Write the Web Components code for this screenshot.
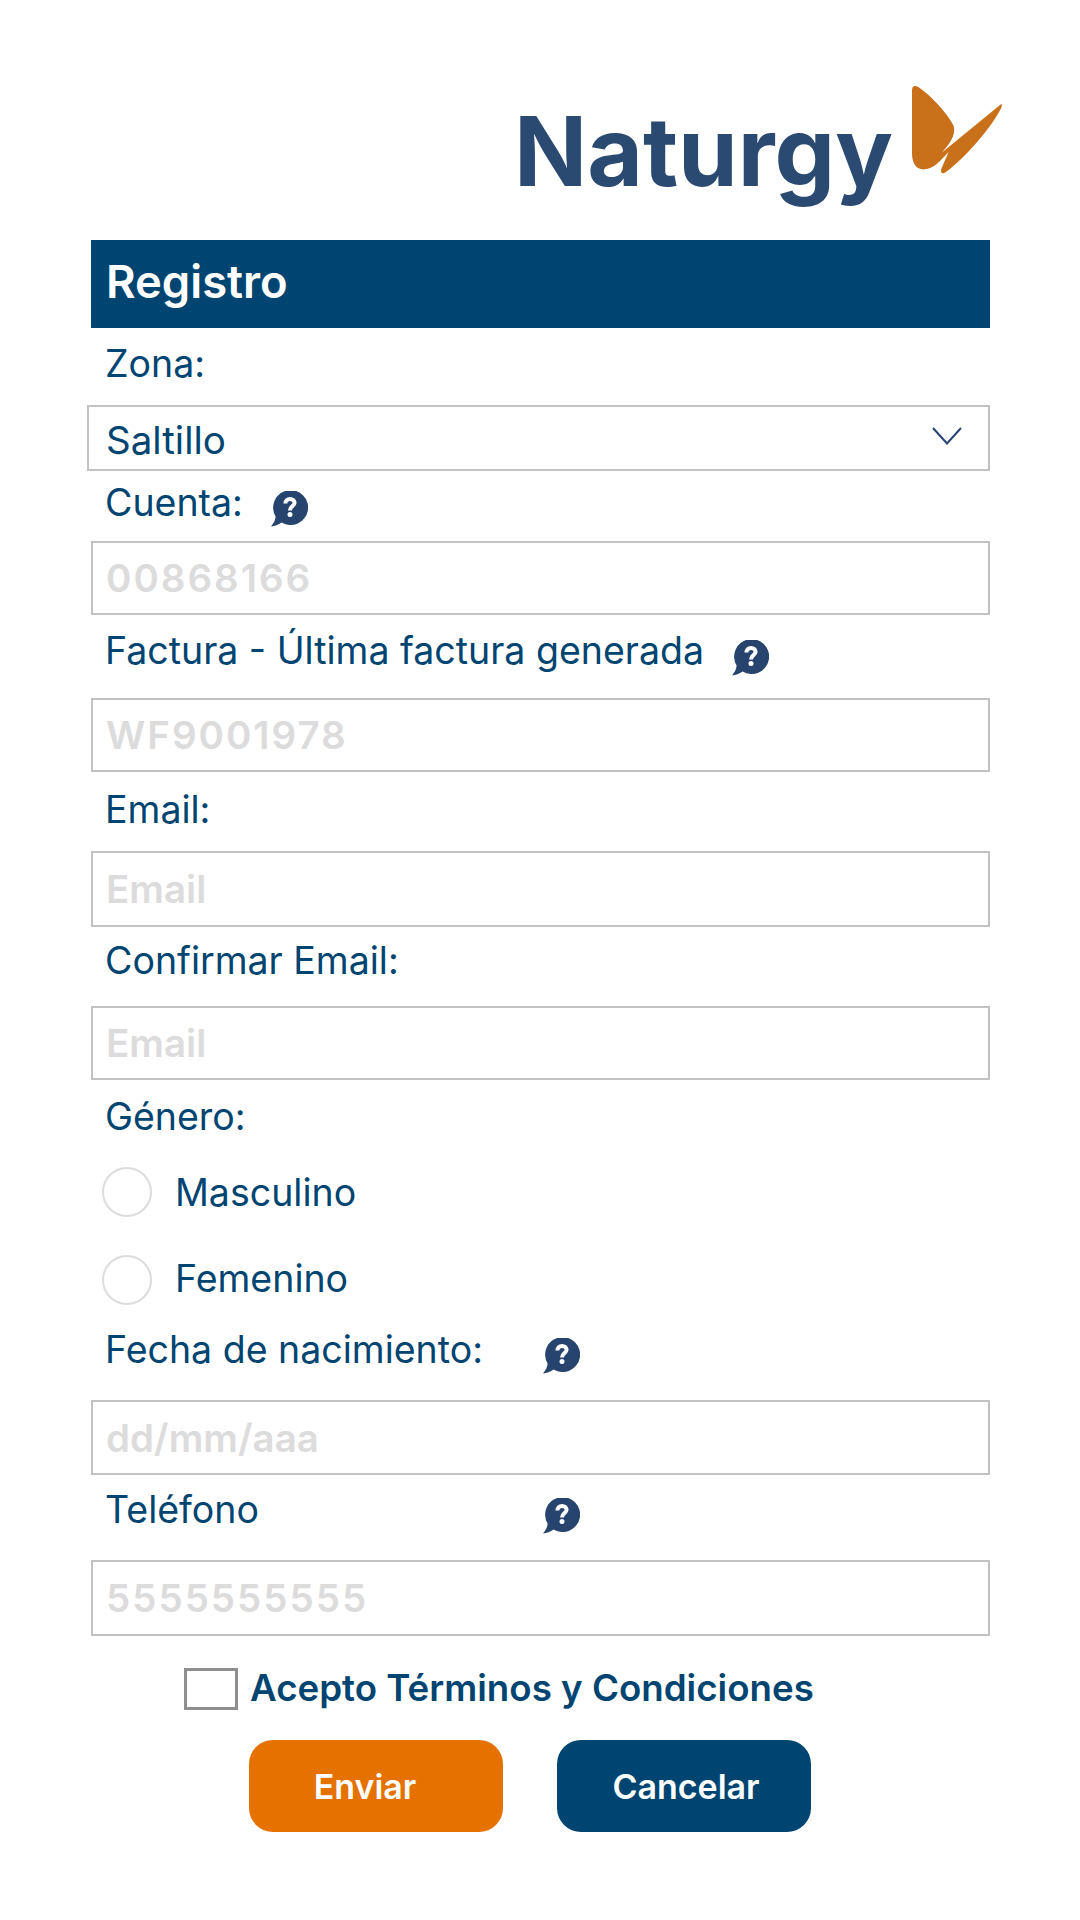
<!DOCTYPE html>
<html lang="es">
<head>
<meta charset="utf-8">
<title>Registro</title>
<style>
  html, body { margin: 0; background: #fff; }
  body { width: 1080px; height: 1920px; overflow: hidden; font-family: Inter, sans-serif; }
  registro-page { width: 1080px; }
</style>
</head>
<body>
<registro-page>
  <naturgy-logo></naturgy-logo>
  <form-bar>Registro</form-bar>
  <field-label style="--h:77px;--shift:-3px">Zona:</field-label>
  <select-field>Saltillo</select-field>
  <field-label style="--h:70px;--shift:-4px;--icon-shift:3px" help>Cuenta:</field-label>
  <text-field style="--h:74px" spaced>00868166</text-field>
  <field-label style="--h:83px;--shift:-6px;--icon-shift:1px" help>Factura - Última factura generada</field-label>
  <text-field style="--h:74px" spaced>WF9001978</text-field>
  <field-label style="--h:79px;--shift:-2px">Email:</field-label>
  <text-field style="--h:76px">Email</text-field>
  <field-label style="--h:79px;--shift:-6px">Confirmar Email:</field-label>
  <text-field style="--h:74px">Email</text-field>
  <field-label style="--h:87px;--shift:-7px">Género:</field-label>
  <radio-option>Masculino</radio-option>
  <radio-option style="--shift:-2px">Femenino</radio-option>
  <field-label style="--h:95px;--shift:-3px;--text-w:410px;--icon-shift:3px" help>Fecha de nacimiento:</field-label>
  <text-field style="--h:75px">dd/mm/aaa</text-field>
  <field-label style="--h:85px;--shift:-8px;--text-w:410px;--icon-shift:-2px" help>Teléfono</field-label>
  <text-field style="--h:76px" spaced>5555555555</text-field>
  <terms-check>Acepto Términos y Condiciones</terms-check>
  <form-actions>
    <action-button color="#e57200" style="--pad-r:22px">Enviar</action-button>
    <action-button color="#004571" style="--pad-l:4px">Cancelar</action-button>
  </form-actions>
</registro-page>

<script>
  const define = (name, html) => {
    customElements.define(name, class extends HTMLElement {
      constructor() {
        super();
        this.attachShadow({ mode: "open" });
        this.shadowRoot.innerHTML = html;
      }
    });
  };

  const FONT = 'Inter, "Noto Sans", sans-serif';
  const BLUE = "#004571";

  define("registro-page", `
    <style>
      :host { display: block; box-sizing: border-box; padding-left: 91px; padding-right: 90px; }
    </style>
    <slot></slot>
  `);

  define("naturgy-logo", `
    <style>
      :host { display: flex; justify-content: flex-end; align-items: flex-start; height: 240px; margin-right: -30px; }
      .word {
        margin-top: 91px;
        font: 700 96px/120px ${FONT};
        letter-spacing: 0;
        color: #2a4a72;
      }
      svg { width: 120px; height: 120px; margin-top: 70px; margin-left: 7px; }
    </style>
    <span class="word">Naturgy</span>
    <svg viewBox="0 0 360 360" aria-hidden="true">
      <path fill="#c8701a" d="M36 62C36 48 44 45 56 52C92 76 140 128 160 166C168 186 158 214 125 248L301 104C306 101 307 106 304 113C270 180 190 268 138 306C126 314 121 308 124 296L146 246C118 276 100 296 74 298C50 300 36 282 36 250Z"/>
    </svg>
  `);

  define("form-bar", `
    <style>
      :host {
        display: flex; align-items: center; height: 88px; padding-left: 15px;
        background: ${BLUE}; color: #fff;
        font: 600 45.4px ${FONT};
      }
      span { position: relative; top: -3px; }
    </style>
    <span><slot></slot></span>
  `);

  customElements.define("field-label", class extends HTMLElement {
    constructor() {
      super();
      this.attachShadow({ mode: "open" });
      this.shadowRoot.innerHTML = `
        <style>
          :host {
            display: flex; align-items: center; box-sizing: border-box;
            height: var(--h); padding-left: 14px;
            color: ${BLUE}; font: 400 37.5px ${FONT};
          }
          .text { position: relative; top: var(--shift, 0); min-width: var(--text-w, 0); }
          help-icon { margin-left: 27px; position: relative; top: var(--icon-shift, 0); }
        </style>
        <span class="text"><slot></slot></span>
      `;
      if (this.hasAttribute("help")) {
        this.shadowRoot.appendChild(document.createElement("help-icon"));
      }
    }
  });

  define("help-icon", `
    <style>
      :host { display: block; width: 38px; height: 36px; flex: none; }
      svg { display: block; width: 38px; height: 36px; }
    </style>
    <svg viewBox="0 0 38 36" aria-hidden="true">
      <path fill="#27446e" d="M1 35.5C4 32 5.4 29 5.6 25.6A17.5 17.5 0 1 1 11.6 31.6C8.4 34 4.8 35.4 1 35.5Z"/>
      <path fill="none" stroke="#fff" stroke-width="4" d="M15.4 12.6C15.4 9.6 17.4 8 20 8C22.6 8 24.6 9.6 24.6 11.8C24.6 15 20 15.2 20 19.4"/>
      <circle cx="20" cy="23.6" r="2.5" fill="#fff"/>
    </svg>
  `);

  define("select-field", `
    <style>
      :host {
        display: flex; align-items: center; justify-content: space-between; box-sizing: border-box;
        height: 66px; margin-left: -4px; padding: 4px 26px 0 17px;
        border: 2px solid #c2c2c2; color: ${BLUE}; font: 400 38.5px ${FONT};
      }
      svg { width: 30px; height: 18px; margin-top: -8px; }
    </style>
    <span><slot></slot></span>
    <svg viewBox="0 0 30 18" aria-hidden="true"><path fill="none" stroke="#27446e" stroke-width="2" d="M1 1L15 16.5L29 1"/></svg>
  `);

  customElements.define("text-field", class extends HTMLElement {
    constructor() {
      super();
      this.attachShadow({ mode: "open" });
      this.shadowRoot.innerHTML = `
        <style>
          :host {
            display: flex; align-items: center; box-sizing: border-box;
            height: var(--h); padding-left: 13px;
            border: 2px solid #c2c2c2; color: #dcdcdc; font: 600 38.5px ${FONT};
          }
          :host([spaced]) { letter-spacing: 2px; }
        </style>
        <slot></slot>
      `;
    }
  });

  define("radio-option", `
    <style>
      :host {
        display: flex; align-items: center; height: 50px; margin-left: 11px; margin-bottom: 38px;
        color: ${BLUE}; font: 400 37.5px ${FONT};
      }
      :host(:last-of-type) { margin-bottom: 0; }
      i { box-sizing: border-box; width: 50px; height: 50px; margin-right: 23px; border: 2px solid #dcdcdc; border-radius: 50%; flex: none; }
      span { position: relative; top: var(--shift, 0); }
    </style>
    <i></i><span><slot></slot></span>
  `);

  define("terms-check", `
    <style>
      :host {
        display: flex; align-items: center; height: 42px; margin: 32px 0 30px 93px;
        color: ${BLUE}; font: 600 36.7px ${FONT};
      }
      i { box-sizing: border-box; width: 54px; height: 42px; margin-right: 12px; border: 3px solid #8f8f8f; flex: none; }
      span { position: relative; top: -2px; }
    </style>
    <i></i><span><slot></slot></span>
  `);

  define("form-actions", `
    <style>
      :host { display: flex; gap: 54px; margin-left: 158px; }
    </style>
    <slot></slot>
  `);

  customElements.define("action-button", class extends HTMLElement {
    constructor() {
      super();
      this.attachShadow({ mode: "open" });
      this.shadowRoot.innerHTML = `
        <style>
          :host {
            display: flex; align-items: center; justify-content: center; box-sizing: border-box;
            width: 254px; height: 92px; border-radius: 24px;
            padding: 0 var(--pad-r, 0) 0 var(--pad-l, 0);
            background: ${this.getAttribute("color")}; color: #fff; font: 600 34px ${FONT};
          }
        </style>
        <slot></slot>
      `;
    }
  });
</script>
</body>
</html>
